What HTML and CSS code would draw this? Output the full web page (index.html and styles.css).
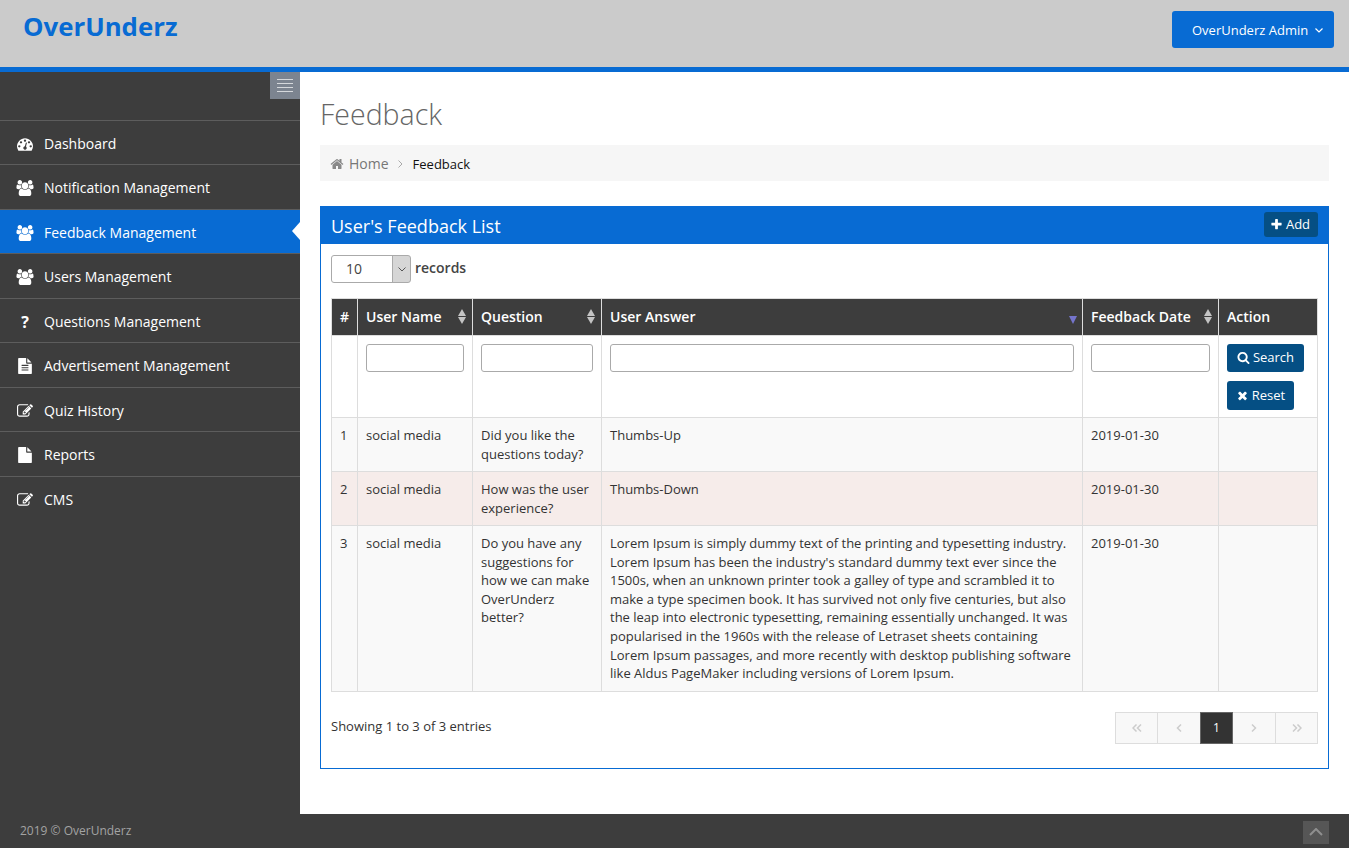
FILE: index.html
```html
<!DOCTYPE html>
<html lang="en">
  <head>
    <title>OverUnderz Admin - Feedback</title>
    <link rel="stylesheet" href="styles.css">
  </head>
<body>
  <svg class="defs" width="0" height="0">
    <symbol id="i-dashboard" viewBox="0 0 1792 1792"><path d="M384 1152q0-53-37.500-90.500t-90.500-37.500-90.500 37.500-37.500 90.500 37.500 90.500 90.500 37.500 90.500-37.500 37.500-90.500zm192-448q0-53-37.500-90.500t-90.500-37.500-90.500 37.500-37.500 90.500 37.500 90.500 90.500 37.500 90.500-37.500 37.500-90.500zm428 481l101-382q6-26-7.500-48.500t-38.500-29.500-48 6.500-30 39.500l-101 382q-60 5-107 43.500t-63 98.500q-20 77 20 146t117 89 146-20 89-117q16-60-6-117t-72-91zm660-33q0-53-37.500-90.500t-90.500-37.500-90.500 37.500-37.500 90.500 37.500 90.500 90.500 37.500 90.500-37.500 37.500-90.500zm-640-640q0-53-37.500-90.500t-90.500-37.500-90.500 37.500-37.500 90.500 37.500 90.500 90.500 37.500 90.500-37.500 37.500-90.500zm448 192q0-53-37.500-90.500t-90.500-37.500-90.500 37.500-37.500 90.500 37.500 90.500 90.500 37.500 90.500-37.500 37.500-90.500zm320 448q0 261-141 483-19 29-54 29h-1402q-35 0-54-29-141-221-141-483 0-182 71-348t191-286 286-191 348-71 348 71 286 191 191 286 71 348z"/></symbol>
    <symbol id="i-users" viewBox="0 0 1920 1792"><path d="M593 896q-162 5-265 128h-134q-82 0-138-40.500t-56-118.500q0-353 124-353 6 0 43.500 21t97.500 42.500 119 21.500q67 0 133-23-5 37-5 66 0 139 81 256zm1071 637q0 120-73 189.500t-194 69.500h-874q-121 0-194-69.500t-73-189.500q0-53 3.500-103.500t14-109 26.500-108.500 43-97.500 62-81 85.500-53.500 111.500-20q10 0 43 21.500t73 48 107 48 135 21.500 135-21.500 107-48 73-48 43-21.500q61 0 111.500 20t85.500 53.500 62 81 43 97.500 26.500 108.500 14 109 3.500 103.500zm-1024-1277q0 106-75 181t-181 75-181-75-75-181 75-181 181-75 181 75 75 181zm704 384q0 159-112.500 271.500t-271.500 112.500-271.500-112.500-112.500-271.500 112.500-271.500 271.500-112.500 271.500 112.500 112.500 271.500zm576 225q0 78-56 118.500t-138 40.500h-134q-103-123-265-128 81-117 81-256 0-29-5-66 66 23 133 23 59 0 119-21.500t97.500-42.500 43.500-21q124 0 124 353zm-128-609q0 106-75 181t-181 75-181-75-75-181 75-181 181-75 181 75 75 181z"/></symbol>
    <symbol id="i-filetext" viewBox="0 0 1792 1792"><path d="M1596 476q14 14 28 36h-472v-472q22 14 36 28zm-476 164h544v1056q0 40-28 68t-68 28h-1344q-40 0-68-28t-28-68v-1600q0-40 28-68t68-28h800v544q0 40 28 68t68 28zm160 736v-64q0-14-9-23t-23-9h-704q-14 0-23 9t-9 23v64q0 14 9 23t23 9h704q14 0 23-9t9-23zm0-256v-64q0-14-9-23t-23-9h-704q-14 0-23 9t-9 23v64q0 14 9 23t23 9h704q14 0 23-9t9-23zm0-256v-64q0-14-9-23t-23-9h-704q-14 0-23 9t-9 23v64q0 14 9 23t23 9h704q14 0 23-9t9-23z"/></symbol>
    <symbol id="i-file" viewBox="0 0 1792 1792"><path d="M1152 512v-472q22 14 36 28l408 408q14 14 28 36h-472zm-128 32q0 40 28 68t68 28h544v1056q0 40-28 68t-68 28h-1344q-40 0-68-28t-28-68v-1600q0-40 28-68t68-28h800v544z"/></symbol>
    <symbol id="i-edit" viewBox="0 0 1792 1792"><path d="M888 1184l116-116-152-152-116 116v56h96v96h56zm440-720q-16-16-33 1l-350 350q-17 17-1 33t33-1l350-350q17-17 1-33zm80 594v190q0 119-84.500 203.500t-203.500 84.500h-832q-119 0-203.500-84.500t-84.500-203.500v-832q0-119 84.500-203.500t203.500-84.500h832q63 0 117 25 15 7 18 23 3 17-9 29l-49 49q-14 14-32 8-23-6-45-6h-832q-66 0-113 47t-47 113v832q0 66 47 113t113 47h832q66 0 113-47t47-113v-126q0-13 9-22l64-64q15-15 35-7t20 29zm-96-738l288 288-672 672h-288v-288zm444 132l-92 92-288-288 92-92q28-28 68-28t68 28l152 152q28 28 28 68t-28 68z"/></symbol>
    <symbol id="i-home" viewBox="0 0 1792 1792"><path d="M1472 992v480q0 26-19 45t-45 19h-384v-384h-256v384h-384q-26 0-45-19t-19-45v-480q0-1 .5-3t.5-3l575-474 575 474q1 2 1 6zm223-69l-62 74q-8 9-21 11h-3q-13 0-21-7l-692-577-692 577q-12 8-24 7-13-2-21-11l-62-74q-8-10-7-23.500t11-21.500l719-599q32-26 76-26t76 26l244 204v-195q0-14 9-23t23-9h192q14 0 23 9t9 23v408l219 182q10 8 11 21.500t-7 23.500z"/></symbol>
    <symbol id="i-search" viewBox="0 0 1792 1792"><path d="M1216 832q0-185-131.500-316.500t-316.500-131.500-316.500 131.500-131.500 316.500 131.500 316.500 316.500 131.500 316.500-131.500 131.500-316.500zm512 832q0 52-38 90t-90 38q-54 0-90-38l-343-342q-179 124-399 124-143 0-273.500-55.500t-225-150-150-225-55.500-273.500 55.500-273.500 150-225 225-150 273.500-55.500 273.500 55.500 225 150 150 225 55.500 273.500q0 220-124 399l343 343q37 37 37 90z"/></symbol>
    <symbol id="i-plus" viewBox="0 0 1792 1792"><path d="M1600 736v192q0 40-28 68t-68 28h-416v416q0 40-28 68t-68 28h-192q-40 0-68-28t-28-68v-416h-416q-40 0-68-28t-28-68v-192q0-40 28-68t68-28h416v-416q0-40 28-68t68-28h192q40 0 68 28t28 68v416h416q40 0 68 28t28 68z"/></symbol>
    <symbol id="i-times" viewBox="0 0 1792 1792"><path d="M1490 1322q0 40-28 68l-136 136q-28 28-68 28t-68-28l-294-294-294 294q-28 28-68 28t-68-28l-136-136q-28-28-28-68t28-68l294-294-294-294q-28-28-28-68t28-68l136-136q28-28 68-28t68 28l294 294 294-294q28-28 68-28t68 28l136 136q28 28 28 68t-28 68l-294 294 294 294q28 28 28 68z"/></symbol>
  </svg>

  <header class="topbar">
    <div class="logo">OverUnderz</div>
    <button class="admin-btn">OverUnderz Admin
      <svg class="chev" viewBox="0 0 8 5"><polyline points="0.5,0.5 4,4 7.5,0.5"/></svg>
    </button>
  </header>

  <div class="wrap">
    <aside class="sidebar">
      <div class="toggler-row">
        <div class="toggler"><span></span><span></span><span></span><span></span></div>
      </div>
      <ul class="menu">
        <li><a><svg class="mi"><use href="#i-dashboard"/></svg>Dashboard</a></li>
        <li><a><svg class="mi"><use href="#i-users"/></svg>Notification Management</a></li>
        <li class="active"><a><svg class="mi"><use href="#i-users"/></svg>Feedback Management</a></li>
        <li><a><svg class="mi"><use href="#i-users"/></svg>Users Management</a></li>
        <li><a><span class="mi q">?</span>Questions Management</a></li>
        <li><a><svg class="mi"><use href="#i-filetext"/></svg>Advertisement Management</a></li>
        <li><a><svg class="mi"><use href="#i-edit"/></svg>Quiz History</a></li>
        <li><a><svg class="mi"><use href="#i-file"/></svg>Reports</a></li>
        <li><a><svg class="mi"><use href="#i-edit"/></svg>CMS</a></li>
      </ul>
    </aside>

    <main class="content">
      <h1 class="page-title">Feedback</h1>
      <div class="breadcrumb">
        <svg class="home-i"><use href="#i-home"/></svg>
        <span class="crumb">Home</span>
        <svg class="crumb-sep" viewBox="0 0 5 8"><polyline points="0.5,0.5 4,4 0.5,7.500"/></svg>
        <span class="crumb-now">Feedback</span>
      </div>

      <section class="portlet">
        <div class="portlet-head">
          <span class="portlet-title">User's Feedback List</span>
          <button class="btn btn-add"><svg class="bi"><use href="#i-plus"/></svg>Add</button>
        </div>
        <div class="portlet-body">
          <div class="length">
            <div class="select-box">
              <select><option>10</option></select>
              <svg class="chev-dark" viewBox="0 0 8 5"><polyline points="0.5,0.5 4,4 7.500,0.5"/></svg>
            </div>
            <b>records</b>
          </div>

          <table class="grid">
            <thead>
              <tr>
                <th class="c-num">#</th>
                <th class="c-name">User Name<span class="sort"></span></th>
                <th class="c-q">Question<span class="sort"></span></th>
                <th class="c-ans">User Answer<span class="sort-desc"></span></th>
                <th class="c-date">Feedback Date<span class="sort"></span></th>
                <th class="c-act">Action</th>
              </tr>
            </thead>
            <tbody>
              <tr class="filter">
                <td></td>
                <td><input type="text"></td>
                <td><input type="text"></td>
                <td><input type="text"></td>
                <td><input type="text"></td>
                <td>
                  <button class="btn btn-search"><svg class="bi"><use href="#i-search"/></svg>Search</button>
                  <button class="btn btn-reset"><svg class="bi"><use href="#i-times"/></svg>Reset</button>
                </td>
              </tr>
              <tr class="odd">
                <td>1</td>
                <td>social media</td>
                <td>Did you like the questions today?</td>
                <td>Thumbs-Up</td>
                <td>2019-01-30</td>
                <td></td>
              </tr>
              <tr class="pink">
                <td>2</td>
                <td>social media</td>
                <td>How was the user experience?</td>
                <td>Thumbs-Down</td>
                <td>2019-01-30</td>
                <td></td>
              </tr>
              <tr class="odd">
                <td>3</td>
                <td>social media</td>
                <td>Do you have any suggestions for how we can make OverUnderz better?</td>
                <td>Lorem Ipsum is simply dummy text of the printing and typesetting industry. Lorem Ipsum has been the industry's standard dummy text ever since the 1500s, when an unknown printer took a galley of type and scrambled it to make a type specimen book. It has survived not only five centuries, but also the leap into electronic typesetting, remaining essentially unchanged. It was popularised in the 1960s with the release of Letraset sheets containing Lorem Ipsum passages, and more recently with desktop publishing software like Aldus PageMaker including versions of Lorem Ipsum.</td>
                <td>2019-01-30</td>
                <td></td>
              </tr>
            </tbody>
          </table>

          <div class="table-foot">
            <span class="info">Showing 1 to 3 of 3 entries</span>
            <ul class="pager">
              <li class="wide"><svg viewBox="0 0 10 8"><polyline points="4.500,0.500 1,4 4.500,7.500"/><polyline points="9,0.500 5.500,4 9,7.500"/></svg></li>
              <li class="wide"><svg viewBox="0 0 10 8"><polyline points="7,0.500 3.500,4 7,7.500"/></svg></li>
              <li class="current">1</li>
              <li class="wide"><svg viewBox="0 0 10 8"><polyline points="3,0.500 6.500,4 3,7.500"/></svg></li>
              <li class="wide"><svg viewBox="0 0 10 8"><polyline points="1,0.500 4.500,4 1,7.500"/><polyline points="5.500,0.500 9,4 5.500,7.500"/></svg></li>
            </ul>
          </div>
        </div>
      </section>
    </main>
  </div>

  <footer class="footer">
    <span>2019 &copy; OverUnderz</span>
    <div class="to-top"><svg viewBox="0 0 14 8"><polyline points="1,7 7,1 13,7"/></svg></div>
  </footer>
</body>
</html>
```

FILE: styles.css
```css
* {
  box-sizing: border-box;
}
html, body {
  margin: 0;
  height: 100%;
}
body {
  display: flex;
  flex-direction: column;
  min-height: 848px;
  font: 13px/1.42857 "Open Sans", sans-serif;
  color: #333;
  background: #fff;
}
.defs {
  position: absolute;
}
ul {
  list-style: none;
  margin: 0;
  padding: 0;
}
svg {
  fill: currentColor;
}

/* top bar */
.topbar {
  flex: none;
  height: 72px;
  padding: 11px 15px 0 23px;
  display: flex;
  justify-content: space-between;
  align-items: flex-start;
  background: #cbcbcb;
  border-bottom: 5px solid #086bd3;
}
.logo {
  font-size: 25.8px;
  line-height: 30px;
  font-weight: 700;
  color: #086bd3;
}
.admin-btn {
  width: 162px;
  height: 37px;
  padding: 0 11px 0 20px;
  display: flex;
  justify-content: space-between;
  align-items: center;
  border: 0;
  border-radius: 3px;
  background: #086bd3;
  color: #fff;
  font: 13px "Open Sans", sans-serif;
}
.chev {
  width: 8px;
  height: 5px;
  margin-top: 2px;
  fill: none;
  stroke: #fff;
  stroke-width: 1.2;
}

.wrap {
  flex: 1;
  display: flex;
  min-height: 0;
}

/* sidebar */
.sidebar {
  flex: none;
  width: 300px;
  background: #3d3d3d;
}
.toggler-row {
  display: flex;
  justify-content: flex-end;
  height: 47.8px;
}
.toggler {
  width: 30px;
  height: 27px;
  padding: 7px;
  display: flex;
  flex-direction: column;
  justify-content: space-between;
  background: #7c8490;
}
.toggler span {
  height: 1px;
  background: #d5d8dc;
}
.menu li {
  position: relative;
  height: 44.5px;
  border-top: 1px solid #5d5d5d;
}
.menu a {
  display: flex;
  align-items: center;
  height: 100%;
  padding: 2px 0 0 16px;
  color: #fff;
  font-size: 14px;
}
.mi {
  flex: none;
  width: 18px;
  height: 16px;
  margin-right: 10px;
}
.q {
  text-align: center;
  font-size: 16px;
  font-weight: 700;
  line-height: 16px;
}
.menu li.active {
  background: #086bd3;
  border-top-color: #5d5d5d;
}
.menu li.active::after {
  content: "";
  position: absolute;
  right: 0;
  top: 12px;
  border: 9px solid transparent;
  border-left: 0;
  border-right: 8px solid #fff;
}

/* content */
.content {
  flex: 1;
  min-width: 0;
  padding: 0 20px;
}
.page-title {
  margin: 25px 0 13px;
  font-size: 28.5px;
  line-height: 35px;
  font-weight: 300;
  color: #666;
}
.breadcrumb {
  height: 36px;
  padding: 2px 0 0 10px;
  display: flex;
  align-items: center;
  background: #f6f6f6;
}
.home-i {
  width: 14px;
  height: 14px;
  margin-right: 5px;
  color: #888;
}
.crumb {
  font-size: 14px;
  color: #777;
}
.crumb-sep {
  width: 5px;
  height: 8px;
  margin: 0 10px 0 9px;
  fill: none;
  stroke: #aaa;
}
.crumb-now {
  color: #111;
}

.portlet {
  margin-top: 25px;
}
.portlet-head {
  height: 38px;
  padding: 6px 11px;
  display: flex;
  justify-content: space-between;
  align-items: flex-start;
  background: #086bd3;
}
.portlet-title {
  font-size: 18px;
  line-height: 28px;
  color: #fff;
}
.portlet-body {
  height: 525px;
  padding: 11px 10px 0;
  border: 1px solid #086bd3;
  border-top: 0;
}

.btn {
  display: block;
  border: 0;
  border-radius: 3px;
  background: #054f84;
  color: #fff;
  font: 13px "Open Sans", sans-serif;
}
.bi {
  display: inline-block;
  vertical-align: -2px;
  width: 13px;
  height: 13px;
  margin-right: 3px;
}
.btn-add {
  width: 54px;
  height: 25px;
  padding: 0 2px 2px 0;
}
.btn-search {
  width: 77px;
  height: 28px;
  padding: 0 0 2px;
  margin-bottom: 9px;
}
.btn-reset {
  width: 67px;
  height: 29px;
  padding: 0;
}

.length {
  display: flex;
  align-items: center;
  gap: 4px;
  height: 28px;
  margin-bottom: 15px;
  font-size: 14px;
  color: #444;
}
.length b {
  font-weight: 600;
  margin-top: -2px;
}
.select-box {
  position: relative;
  width: 80px;
  height: 28px;
}
.select-box select {
  width: 100%;
  height: 100%;
  padding: 0 0 2px 14px;
  appearance: none;
  border: 1px solid #aaa;
  border-radius: 3px;
  color: #444;
  font: 14px "Open Sans", sans-serif;
  background: linear-gradient(to left, #d6d6d6 17px, #aaa 17px, #aaa 18px, #fff 18px);
}
.chev-dark {
  position: absolute;
  right: 5px;
  top: 12px;
  width: 8px;
  height: 5px;
  fill: none;
  stroke: #555;
}

.grid {
  width: 986px;
  table-layout: fixed;
  border-collapse: collapse;
}
.grid th, .grid td {
  padding: 8px;
  border: 1px solid #ddd;
  text-align: left;
  vertical-align: top;
}
.grid th {
  position: relative;
  font-size: 14px;
  font-weight: 600;
  color: #fff;
  background: #3d3d3d;
}
.c-num { width: 26px; }
.c-name { width: 115px; }
.c-q { width: 129px; }
.c-ans { width: 481px; }
.c-date { width: 136px; }
.c-act { width: 99px; }
.sort {
  position: absolute;
  right: 5px;
  top: 10px;
  width: 9px;
  height: 15px;
}
.sort::before, .sort::after {
  content: "";
  position: absolute;
  left: 0;
  border: 4.5px solid transparent;
}
.sort::before {
  top: 0;
  border-top: 0;
  border-bottom: 7px solid #c4c4c4;
}
.sort::after {
  bottom: 0;
  border-bottom: 0;
  border-top: 7px solid #c4c4c4;
}
.sort-desc {
  position: absolute;
  right: 5px;
  top: 17px;
  border: 4.5px solid transparent;
  border-bottom: 0;
  border-top: 8px solid #7474cc;
}
.filter td {
  background: #fff;
  padding-bottom: 7px;
}
.filter input {
  display: block;
  width: 100%;
  height: 28px;
  border: 1px solid #aaa;
  border-radius: 3px;
}
.odd td {
  background: #f9f9f9;
}
.pink td {
  background: #f6ecea;
}

.table-foot {
  display: flex;
  justify-content: space-between;
  align-items: flex-start;
  margin-top: 20px;
}
.info {
  line-height: 28px;
}
.pager {
  display: flex;
  height: 32px;
}
.pager li {
  display: flex;
  align-items: center;
  justify-content: center;
  height: 32px;
  margin-left: -1px;
  border: 1px solid #ddd;
  background: #f8f8f8;
}
.pager .wide {
  width: 43px;
}
.pager .wide:nth-child(2), .pager .wide:nth-child(4) {
  width: 44px;
}
.pager svg {
  width: 10px;
  height: 8px;
  fill: none;
  stroke: #ccc;
  stroke-width: 1.5;
}
.pager .current {
  position: relative;
  z-index: 1;
  width: 33px;
  font-size: 12px;
  color: #fff;
  background: #333;
  border-color: #666;
}

/* footer */
.footer {
  flex: none;
  height: 34px;
  padding: 0 20px;
  display: flex;
  justify-content: space-between;
  align-items: center;
  background: #3d3d3d;
  color: #a3a3a3;
  font-size: 12px;
}
.to-top {
  width: 26px;
  height: 23px;
  margin-top: 2px;
  display: flex;
  align-items: center;
  justify-content: center;
  background: #565656;
}
.to-top svg {
  width: 14px;
  height: 8px;
  fill: none;
  stroke: #8f8f8f;
  stroke-width: 2;
}
```
